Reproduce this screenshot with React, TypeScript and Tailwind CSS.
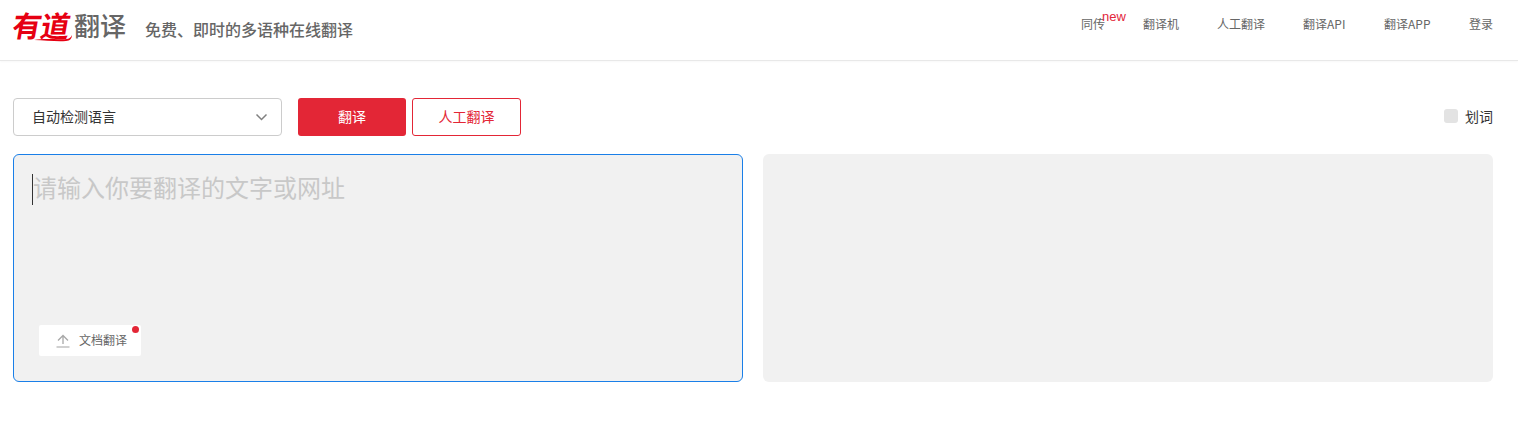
import React from "react";

const cjk = "font-['Microsoft_YaHei','Noto_Sans_CJK_SC',sans-serif]";

const nav = [
  { label: "同传", w: "w-[25px]", mr: "mr-[37px]" },
  { label: "翻译机", w: "w-[37px]", mr: "mr-[37px]" },
  { label: "人工翻译", w: "w-[49px]", mr: "mr-[37px]" },
  { label: "翻译API", w: "w-[44px]", mr: "mr-[37px]" },
  { label: "翻译APP", w: "w-[48px]", mr: "mr-[37px]" },
  { label: "登录", w: "w-[24px]", mr: "" },
];

export default function App() {
  return (
    <div className={`h-[425px] w-[1518px] overflow-hidden bg-white ${cjk}`}>
      <header className="flex h-[61px] items-start border-b border-[#e8e8e8] pl-[13px] pr-[25px] shadow-[0_1px_2px_rgba(0,0,0,0.03)]">
        <div className="relative mt-[6px] flex h-[36px] w-[58px] items-start">
          <span className="origin-left -skew-x-[10deg] whitespace-nowrap text-[29px] font-bold leading-[36px] tracking-[-0.5px] text-[#e60012]">
            有道
          </span>
          <svg className="absolute left-[20px] top-[27px]" width="40" height="9" viewBox="0 0 40 9">
            <path d="M1 7 C12 5 26 7 34 6 C37 5.500 38 4 39 2 C39 5 37 8 33 8 C24 9 12 7 1 7Z" fill="#e60012" />
          </svg>
        </div>
        <span className="ml-[3px] mt-[7px] text-[26px] font-medium leading-[36px] text-[#666666]">翻译</span>
        <span className="ml-[19px] mt-[19px] text-[16px] font-medium leading-[20px] text-[#666666]">
          免费、即时的多语种在线翻译
        </span>
        <nav className="ml-auto mt-[15px] flex items-start text-[12px] leading-[18px] text-[#666666]">
          {nav.map((n, i) => (
            <a key={n.label} className={`relative block whitespace-nowrap ${n.w} ${n.mr}`}>
              {n.label}
              {i === 0 && (
                <span className="absolute left-[21px] top-[-5px] font-['Liberation_Sans',sans-serif] text-[13px] leading-[14px] text-[#e3263a]">
                  new
                </span>
              )}
            </a>
          ))}
        </nav>
      </header>

      <main className="px-[13px] pt-[37px] pr-[25px]">
        <div className="flex items-center">
          <button className="flex h-[38px] w-[269px] items-center justify-between rounded-[4px] border border-[#cccccc] bg-white pl-[18px] pr-[13px] text-[14px] text-[#333333]">
            <span className="-mt-[2px]">自动检测语言</span>
            <svg width="13" height="8" viewBox="0 0 13 8" fill="none">
              <path d="M1.500 1.500 L6.500 6.500 L11.500 1.500" stroke="#808080" strokeWidth="1.500" />
            </svg>
          </button>
          <button className="ml-[16px] flex h-[38px] w-[108px] items-center justify-center rounded-[3px] bg-[#e32636] pb-[1px] text-[14px] text-white">
            翻译
          </button>
          <button className="ml-[6px] flex h-[38px] w-[109px] items-center justify-center rounded-[3px] border border-[#e32636] bg-white pb-[1px] text-[14px] text-[#e32636]">
            人工翻译
          </button>
          <label className="ml-auto flex items-center gap-[7px] pb-[2px] text-[14px] text-[#333333]">
            <span className="h-[14px] w-[14px] rounded-[3px] bg-[#e3e3e3]" />
            划词
          </label>
        </div>

        <div className="mt-[18px] flex gap-[20px]">
          <div className="relative h-[228px] w-[730px] rounded-[6px] border border-[#1a7fe8] bg-[#f1f1f1] pl-[18px] pt-[17px]">
            <div className="flex items-start">
              <span className="mt-[2px] h-[31px] w-px shrink-0 bg-[#333333]" />
              <span className="-mt-[3px] whitespace-nowrap text-[24px] leading-[36px] text-[#c8c8c8]">
                请输入你要翻译的文字或网址
              </span>
            </div>
            <div className="absolute left-[25px] top-[170px] flex h-[31px] w-[102px] items-center rounded-[2px] bg-white pl-[17px] text-[12px] text-[#666666]">
              <svg className="mr-[9px]" width="14" height="14" viewBox="0 0 14 14" fill="none">
                <path d="M7 10 V2 M2 6.500 L7 1.500 L12 6.500" stroke="#a8a8a8" strokeWidth="1.300" />
                <path d="M0.500 13 H13.500" stroke="#c0c0c0" strokeWidth="1.500" />
              </svg>
              <span className="-mt-[1px]">文档翻译</span>
              <span className="absolute right-[2px] top-[1px] h-[7px] w-[7px] rounded-full bg-[#e32636]" />
            </div>
          </div>
          <div className="h-[228px] w-[730px] rounded-[6px] bg-[#f1f1f1]" />
        </div>
      </main>
    </div>
  );
}
